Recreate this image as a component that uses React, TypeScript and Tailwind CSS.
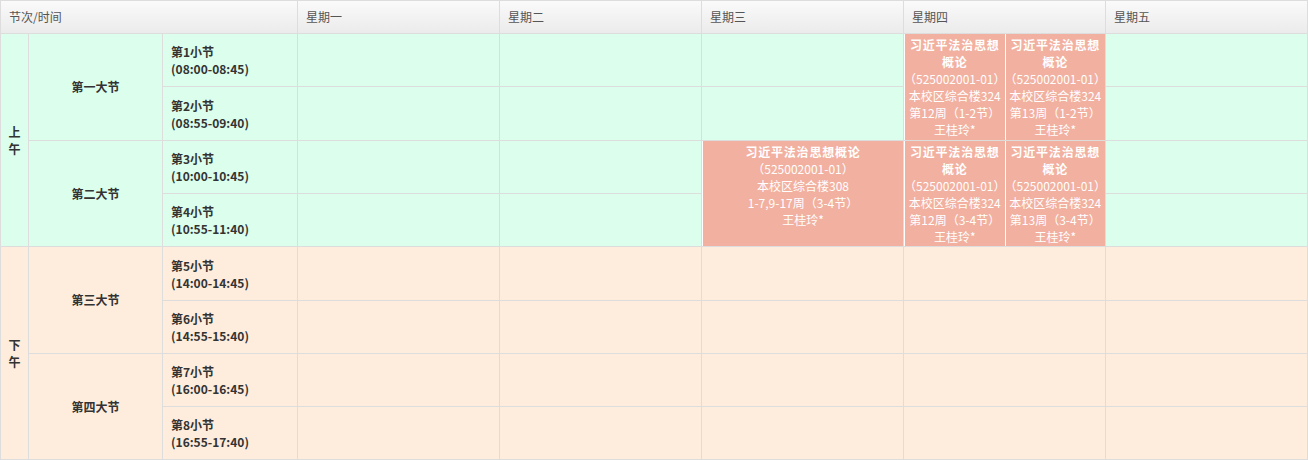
const font = { fontFamily: '"Noto Sans CJK SC", "Noto Sans", sans-serif' };

const days = ['星期一', '星期二', '星期三', '星期四', '星期五'];

function Empty({ pm }: { pm?: boolean }) {
  return <div className={pm ? 'bg-[#feeddc]' : 'bg-[#dcfeec]'} />;
}

function Slot({ n, time, pm }: { n: number; time: string; pm?: boolean }) {
  return (
    <div
      className={`flex flex-col justify-center pl-2 text-[12px] leading-[17px] font-bold text-[#333] ${
        pm ? 'bg-[#feeddc]' : 'bg-[#dcfeec]'
      }`}
    >
      <div>第{n}小节</div>
      <div>({time})</div>
    </div>
  );
}

function Course({ room, weeks }: { room: string; weeks: string }) {
  return (
    <div className="flex-1 min-w-0 border-l border-white bg-[#f2b0a0] pt-[2px] text-center text-[12px] leading-[17px] text-white">
      <div className="font-bold tracking-[0.8px]">习近平法治思想概论</div>
      <div className="flex justify-center whitespace-nowrap">
        <span>（525002001-01）</span>
      </div>
      <div>{room}</div>
      <div>{weeks}</div>
      <div>王桂玲*</div>
    </div>
  );
}

export default function App() {
  return (
    <div
      style={font}
      className="w-[1308px] h-[460px] bg-[#dddddd] p-px grid gap-px grid-cols-[27px_133px_134px_201px_201px_201px_201px_201px] grid-rows-[32px_52px_53px_52px_52px_53px_52px_52px_52px]"
    >
      {/* header */}
      <div className="col-span-3 flex items-center pl-2 text-[12px] text-[#555] bg-linear-to-b from-[#fafafa] to-[#ebebeb]">
        节次/时间
      </div>
      {days.map((d) => (
        <div
          key={d}
          className="flex items-center pl-2 text-[12px] text-[#555] bg-linear-to-b from-[#fafafa] to-[#ebebeb]"
        >
          {d}
        </div>
      ))}

      {/* 第1小节 */}
      <div className="row-span-4 flex flex-col items-center justify-center bg-[#dcfeec] text-[12px] leading-[17px] font-bold text-[#333]">
        <span>上</span>
        <span>午</span>
      </div>
      <div className="row-span-2 flex items-center justify-center bg-[#dcfeec] text-[12px] font-bold text-[#333]">
        第一大节
      </div>
      <Slot n={1} time="08:00-08:45" />
      <Empty />
      <Empty />
      <Empty />
      <div className="row-span-2 flex">
        <Course room="本校区综合楼324" weeks="第12周（1-2节）" />
        <Course room="本校区综合楼324" weeks="第13周（1-2节）" />
      </div>
      <Empty />

      {/* 第2小节 */}
      <Slot n={2} time="08:55-09:40" />
      <Empty />
      <Empty />
      <Empty />
      <Empty />

      {/* 第3小节 */}
      <div className="row-span-2 flex items-center justify-center bg-[#dcfeec] text-[12px] font-bold text-[#333]">
        第二大节
      </div>
      <Slot n={3} time="10:00-10:45" />
      <Empty />
      <Empty />
      <div className="row-span-2 flex">
        <Course room="本校区综合楼308" weeks="1-7,9-17周（3-4节）" />
      </div>
      <div className="row-span-2 flex">
        <Course room="本校区综合楼324" weeks="第12周（3-4节）" />
        <Course room="本校区综合楼324" weeks="第13周（3-4节）" />
      </div>
      <Empty />

      {/* 第4小节 */}
      <Slot n={4} time="10:55-11:40" />
      <Empty />
      <Empty />
      <Empty />

      {/* 第5小节 */}
      <div className="row-span-4 flex flex-col items-center justify-center bg-[#feeddc] text-[12px] leading-[17px] font-bold text-[#333]">
        <span>下</span>
        <span>午</span>
      </div>
      <div className="row-span-2 flex items-center justify-center bg-[#feeddc] text-[12px] font-bold text-[#333]">
        第三大节
      </div>
      <Slot n={5} time="14:00-14:45" pm />
      {days.map((d) => (
        <Empty key={d} pm />
      ))}

      {/* 第6小节 */}
      <Slot n={6} time="14:55-15:40" pm />
      {days.map((d) => (
        <Empty key={d} pm />
      ))}

      {/* 第7小节 */}
      <div className="row-span-2 flex items-center justify-center bg-[#feeddc] text-[12px] font-bold text-[#333]">
        第四大节
      </div>
      <Slot n={7} time="16:00-16:45" pm />
      {days.map((d) => (
        <Empty key={d} pm />
      ))}

      {/* 第8小节 */}
      <Slot n={8} time="16:55-17:40" pm />
      {days.map((d) => (
        <Empty key={d} pm />
      ))}
    </div>
  );
}
